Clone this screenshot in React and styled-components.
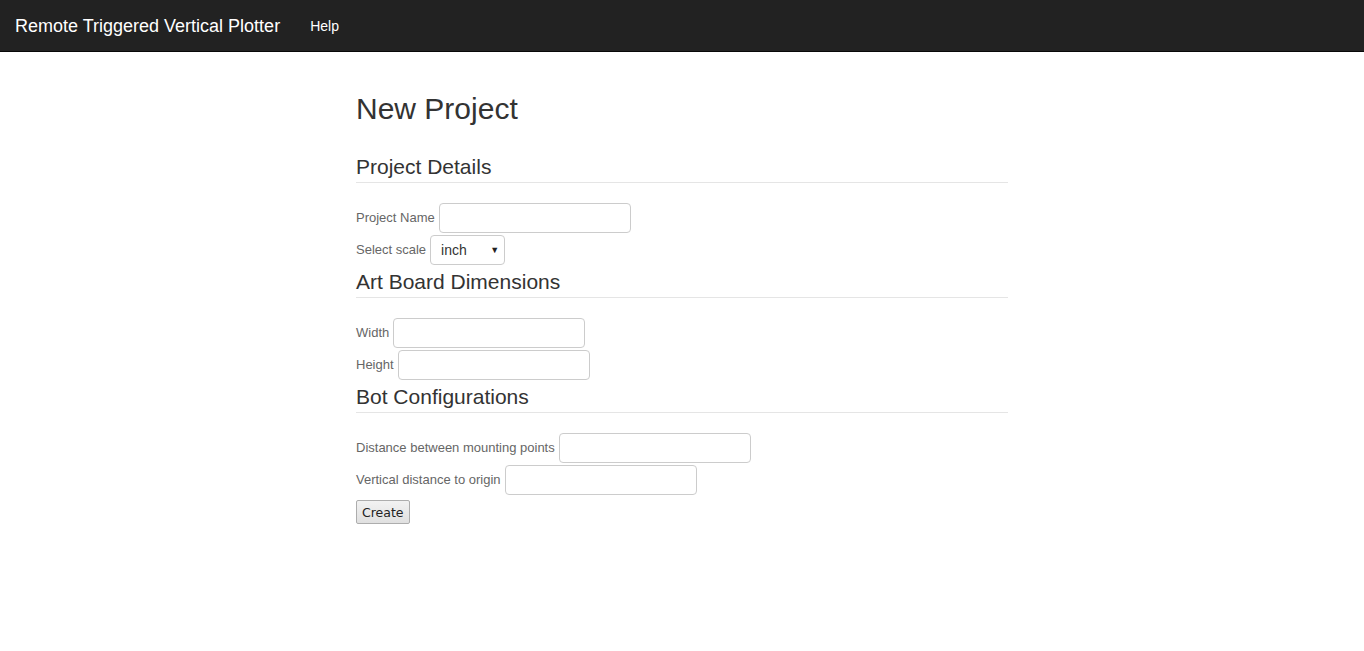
import styled, { createGlobalStyle } from "styled-components";

const GlobalStyle = createGlobalStyle`
  * { box-sizing: border-box; }
  body {
    margin: 0;
    background: #fff;
    font-family: "Liberation Sans", Arial, sans-serif;
    font-size: 14px;
    line-height: 1.42857;
    color: #333;
  }
`;

export default function App() {
  return (
    <>
      <GlobalStyle />
      <Navbar>
        <Brand>Remote Triggered Vertical Plotter</Brand>
        <NavLink>Help</NavLink>
      </Navbar>

      <Container>
        <Title>New Project</Title>

        <Fieldset>
          <Legend>Project Details</Legend>
          <Row>
            <Label>Project Name</Label>
            <Input width={192} />
          </Row>
          <Row>
            <Label>Select scale</Label>
            <SelectWrap>
              <Select defaultValue="inch">
                <option value="inch">inch</option>
                <option value="cm">cm</option>
                <option value="mm">mm</option>
              </Select>
              <Arrow>▼</Arrow>
            </SelectWrap>
          </Row>
        </Fieldset>

        <Fieldset>
          <Legend>Art Board Dimensions</Legend>
          <Row>
            <Label>Width</Label>
            <Input width={192} />
          </Row>
          <Row>
            <Label>Height</Label>
            <Input width={192} />
          </Row>
        </Fieldset>

        <Fieldset>
          <Legend>Bot Configurations</Legend>
          <Row>
            <Label>Distance between mounting points</Label>
            <Input width={192} />
          </Row>
          <Row>
            <Label>Vertical distance to origin</Label>
            <Input width={192} />
          </Row>
        </Fieldset>

        <Button>Create</Button>
      </Container>
    </>
  );
}

const Navbar = styled.nav`
  height: 52px;
  background-color: #222;
  border-bottom: 1px solid #080808;
  display: flex;
  align-items: center;
  padding: 0 15px;
`;

const Brand = styled.span`
  color: #fff;
  font-size: 18px;
  line-height: 20px;
  margin-right: 30px;
`;

const NavLink = styled.span`
  color: #fff;
  font-size: 14px;
  line-height: 20px;
`;

const Container = styled.div`
  width: 652px;
  margin: 0 auto;
  padding-top: 40px;
`;

const Title = styled.h2`
  margin: 0 0 27px;
  font-size: 30px;
  font-weight: 500;
  line-height: 33px;
  color: #333;
`;

const Fieldset = styled.fieldset`
  margin: 0;
  padding: 0;
  border: 0;
  min-width: 0;
`;

const Legend = styled.legend`
  display: block;
  width: 100%;
  padding: 0;
  margin-bottom: 20px;
  font-size: 21px;
  line-height: 30px;
  color: #333;
  border-bottom: 1px solid #e5e5e5;
`;

const Row = styled.div`
  display: flex;
  align-items: center;
  gap: 4px;
  height: 30px;
  margin-bottom: 2px;
`;

const Label = styled.label`
  font-size: 13px;
  color: #666;
  font-weight: normal;
`;

const Input = styled.input`
  width: ${(p) => p.width}px;
  height: 30px;
  border: 1px solid #ccc;
  border-radius: 4px;
  padding: 4px 8px;
  font-family: inherit;
  font-size: 14px;
  background: #fff;
  outline: none;
`;

const SelectWrap = styled.div`
  position: relative;
  width: 75px;
  height: 30px;
`;

const Select = styled.select`
  appearance: none;
  -webkit-appearance: none;
  width: 100%;
  height: 100%;
  border: 1px solid #ccc;
  border-radius: 4px;
  padding: 0 0 0 10px;
  font-family: inherit;
  font-size: 14px;
  color: #333;
  background: #fff;
  outline: none;
`;

const Arrow = styled.span`
  position: absolute;
  right: 6px;
  top: 10px;
  font-size: 9px;
  line-height: 10px;
  color: #222;
  pointer-events: none;
`;

const Button = styled.button`
  margin-top: 3px;
  height: 24px;
  padding: 0 5px;
  font-family: "DejaVu Sans", Verdana, sans-serif;
  font-size: 12.5px;
  color: #222;
  background: linear-gradient(#f2f2f2, #e0e0e0);
  border: 1px solid #adadad;
  border-radius: 2px;
`;
